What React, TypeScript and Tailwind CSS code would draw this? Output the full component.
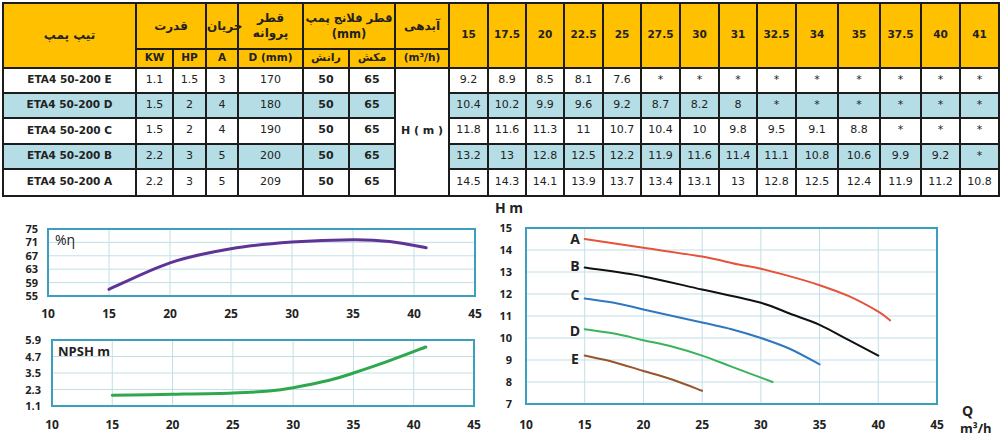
import React from "react";

type P = [number, number];

function smooth(pts: P[]): string {
  let d = `M${pts[0][0].toFixed(1)},${pts[0][1].toFixed(1)}`;
  for (let i = 0; i < pts.length - 1; i++) {
    const p0 = pts[i - 1] || pts[i];
    const p1 = pts[i];
    const p2 = pts[i + 1];
    const p3 = pts[i + 2] || p2;
    const c1x = p1[0] + (p2[0] - p0[0]) / 6;
    const c1y = p1[1] + (p2[1] - p0[1]) / 6;
    const c2x = p2[0] - (p3[0] - p1[0]) / 6;
    const c2y = p2[1] - (p3[1] - p1[1]) / 6;
    d += ` C${c1x.toFixed(1)},${c1y.toFixed(1)} ${c2x.toFixed(1)},${c2y.toFixed(1)} ${p2[0].toFixed(1)},${p2[1].toFixed(1)}`;
  }
  return d;
}

const FONT = '"Open Sans", "Liberation Sans", sans-serif';
const TEAL = "#3aa0bd";
const GRID = "#c2dfe7";

const flows = ["15", "17.5", "20", "22.5", "25", "27.5", "30", "31", "32.5", "34", "35", "37.5", "40", "41"];

type Row = { name: string; kw: string; hp: string; a: string; d: string; h: string[]; blue: boolean };

const rows: Row[] = [
  { name: "ETA4 50-200 E", kw: "1.1", hp: "1.5", a: "3", d: "170", blue: false, h: ["9.2", "8.9", "8.5", "8.1", "7.6", "*", "*", "*", "*", "*", "*", "*", "*", "*"] },
  { name: "ETA4 50-200 D", kw: "1.5", hp: "2", a: "4", d: "180", blue: true, h: ["10.4", "10.2", "9.9", "9.6", "9.2", "8.7", "8.2", "8", "*", "*", "*", "*", "*", "*"] },
  { name: "ETA4 50-200 C", kw: "1.5", hp: "2", a: "4", d: "190", blue: false, h: ["11.8", "11.6", "11.3", "11", "10.7", "10.4", "10", "9.8", "9.5", "9.1", "8.8", "*", "*", "*"] },
  { name: "ETA4 50-200 B", kw: "2.2", hp: "3", a: "5", d: "200", blue: true, h: ["13.2", "13", "12.8", "12.5", "12.2", "11.9", "11.6", "11.4", "11.1", "10.8", "10.6", "9.9", "9.2", "*"] },
  { name: "ETA4 50-200 A", kw: "2.2", hp: "3", a: "5", d: "209", blue: false, h: ["14.5", "14.3", "14.1", "13.9", "13.7", "13.4", "13.1", "13", "12.8", "12.5", "12.4", "11.9", "11.2", "10.8"] },
];

const rowH = ["h-[25px]", "h-[25px]", "h-[26px]", "h-[25px]", "h-[27px]"];

const cell = "border-2 border-[#1c1c1c] text-center p-0 align-middle";

function Table() {
  return (
    <table
      className="ml-[2px] mt-[2px] w-[996px] table-fixed border-collapse text-[11px] text-[#222]"
      style={{ fontFamily: '"DejaVu Sans", Verdana, sans-serif' }}
    >
      <colgroup>
        <col className="w-[133px]" />
        <col className="w-[37px]" />
        <col className="w-[33px]" />
        <col className="w-[32px]" />
        <col className="w-[65px]" />
        <col className="w-[46px]" />
        <col className="w-[46px]" />
        <col className="w-[54px]" />
        <col className="w-[39px]" />
        <col className="w-[38px]" />
        <col className="w-[38px]" />
        <col className="w-[39px]" />
        <col className="w-[38px]" />
        <col className="w-[39px]" />
        <col className="w-[39px]" />
        <col className="w-[38px]" />
        <col className="w-[39px]" />
        <col className="w-[42px]" />
        <col className="w-[42px]" />
        <col className="w-[41px]" />
        <col className="w-[39px]" />
        <col className="w-[39px]" />
      </colgroup>
      <thead>
        <tr className="h-[46px] bg-[#ffc000] font-bold">
          <th rowSpan={2} className={`${cell} text-[12px]`}>تیپ پمپ</th>
          <th colSpan={2} className={`${cell} text-[12px]`}>قدرت</th>
          <th className={`${cell} text-[12px] whitespace-nowrap`}>جریان</th>
          <th className={`${cell} text-[12px] leading-[15px]`}>قطر<br />پروانه</th>
          <th colSpan={2} className={`${cell} text-[11.5px] leading-[16px] whitespace-nowrap`}>قطر فلانج پمپ<br />(mm)</th>
          <th className={`${cell} text-[12px]`}>آبدهی</th>
          {flows.map((f) => (
            <th key={f} rowSpan={2} className={`${cell} text-[10.5px]`}>{f}</th>
          ))}
        </tr>
        <tr className="h-[17px] bg-[#ffc000] font-bold">
          <th className={`${cell} text-[10.5px]`}>KW</th>
          <th className={`${cell} text-[10.5px]`}>HP</th>
          <th className={`${cell} text-[10.5px]`}>A</th>
          <th className={`${cell} text-[10.5px]`}>D (mm)</th>
          <th className={`${cell} text-[11px]`}>رانش</th>
          <th className={`${cell} text-[11px]`}>مکش</th>
          <th className={`${cell} text-[10.5px]`}>(m³/h)</th>
        </tr>
      </thead>
      <tbody>
        {rows.map((r, i) => (
          <tr key={r.name} className={`${rowH[i]} ${r.blue ? "bg-[#b5dde6]" : "bg-white"}`}>
            <td className={`${cell} text-[10.5px] font-bold`}>{r.name}</td>
            <td className={cell}>{r.kw}</td>
            <td className={cell}>{r.hp}</td>
            <td className={cell}>{r.a}</td>
            <td className={cell}>{r.d}</td>
            <td className={`${cell} font-bold`}>50</td>
            <td className={`${cell} font-bold`}>65</td>
            {i === 0 && (
              <td rowSpan={5} className={`${cell} bg-white font-bold`}>H ( m )</td>
            )}
            {r.h.map((v, j) => (
              <td key={j} className={cell}>{v}</td>
            ))}
          </tr>
        ))}
      </tbody>
    </table>
  );
}

function EffChart() {
  const x = (q: number) => 48 + (q - 10) * (427 / 35);
  const y = (e: number) => 32 + (75 - e) * (67 / 20);
  const pts: P[] = [
    [15, 57], [20, 64.9], [25, 69.1], [30, 71.1], [35, 71.8], [38, 71.3], [41, 69.4],
  ].map(([q, e]) => [x(q), y(e)] as P);
  return (
    <svg width={490} height={125} style={{ fontFamily: FONT }}>
      {[15, 20, 25, 30, 35, 40].map((q) => (
        <line key={q} x1={x(q)} x2={x(q)} y1={32} y2={99} stroke={GRID} strokeWidth={1} />
      ))}
      {[71, 67, 63, 59].map((e) => (
        <line key={e} x1={48} x2={475} y1={y(e)} y2={y(e)} stroke={GRID} strokeWidth={1} />
      ))}
      <rect x={48} y={32} width={427} height={67} fill="none" stroke={TEAL} strokeWidth={2} />
      <path d={smooth(pts)} fill="none" stroke="#5f3497" strokeWidth={3} strokeLinecap="round" />
      {[75, 71, 67, 63, 59, 55].map((e) => (
        <text key={e} x={38} y={y(e) + 4} textAnchor="end" fontSize={11} fontWeight={700} fill="#222">{e}</text>
      ))}
      {[10, 15, 20, 25, 30, 35, 40, 45].map((q) => (
        <text key={q} x={x(q)} y={121} textAnchor="middle" fontSize={12} fontWeight={700} fill="#222">{q}</text>
      ))}
      <text x={55} y={48} fontSize={14} fill="#222">%η</text>
    </svg>
  );
}

function NpshChart() {
  const x = (q: number) => 52 + (q - 10) * (422 / 35);
  const y = (n: number) => 18 + (5.9 - n) * (66 / 4.8);
  const pts: P[] = [
    [15, 1.88], [20, 1.95], [25, 2.05], [28, 2.19], [30, 2.43], [33, 2.97], [35, 3.5], [38, 4.4], [41, 5.39],
  ].map(([q, n]) => [x(q), y(n)] as P);
  return (
    <svg width={490} height={115} style={{ fontFamily: FONT }}>
      {[15, 20, 25, 30, 35, 40].map((q) => (
        <line key={q} x1={x(q)} x2={x(q)} y1={18} y2={84} stroke={GRID} strokeWidth={1} />
      ))}
      {[4.7, 3.5, 2.3].map((n) => (
        <line key={n} x1={52} x2={474} y1={y(n)} y2={y(n)} stroke={GRID} strokeWidth={1} />
      ))}
      <rect x={52} y={18} width={422} height={66} fill="none" stroke={TEAL} strokeWidth={2} />
      <path d={smooth(pts)} fill="none" stroke="#2ea84c" strokeWidth={3} strokeLinecap="round" />
      {["5.9", "4.7", "3.5", "2.3", "1.1"].map((n) => (
        <text key={n} x={41} y={y(parseFloat(n)) + 4} textAnchor="end" fontSize={11} fontWeight={700} fill="#222">{n}</text>
      ))}
      {[10, 15, 20, 25, 30, 35, 40, 45].map((q) => (
        <text key={q} x={x(q)} y={107} textAnchor="middle" fontSize={12} fontWeight={700} fill="#222">{q}</text>
      ))}
      <text x={58} y={34} fontSize={13} fontWeight={700} fill="#222">NPSH m</text>
    </svg>
  );
}

const headCurves: { label: string; color: string; pts: P[]; ly: number }[] = [
  { label: "A", color: "#e5533b", ly: 47, pts: [[15, 14.5], [20, 14.1], [25, 13.7], [28, 13.35], [30, 13.15], [32.5, 12.8], [35, 12.4], [37.5, 11.9], [40, 11.2], [41, 10.8]] },
  { label: "B", color: "#111111", ly: 74, pts: [[15, 13.2], [20, 12.8], [25, 12.2], [30, 11.6], [32.5, 11.1], [35, 10.6], [37.5, 9.9], [40, 9.2]] },
  { label: "C", color: "#2f78bf", ly: 103, pts: [[15, 11.8], [17.5, 11.6], [20, 11.3], [25, 10.7], [27.5, 10.4], [30, 10.0], [32.5, 9.5], [35, 8.8]] },
  { label: "D", color: "#3bb35b", ly: 139, pts: [[15, 10.4], [17.5, 10.2], [20, 9.9], [22.5, 9.6], [25, 9.2], [27.5, 8.7], [31, 8.0]] },
  { label: "E", color: "#96552c", ly: 167, pts: [[15, 9.2], [17.5, 8.9], [20, 8.5], [22.5, 8.1], [25, 7.6]] },
];

function HeadChart() {
  const x = (q: number) => 36 + (q - 10) * (411 / 35);
  const y = (h: number) => 31 + (15 - h) * 22;
  return (
    <svg width={510} height={240} style={{ fontFamily: FONT }}>
      {[15, 20, 25, 30, 35, 40].map((q) => (
        <line key={q} x1={x(q)} x2={x(q)} y1={31} y2={207} stroke={GRID} strokeWidth={1} />
      ))}
      {[14, 13, 12, 11, 10, 9, 8].map((h) => (
        <line key={h} x1={36} x2={447} y1={y(h)} y2={y(h)} stroke={GRID} strokeWidth={1} />
      ))}
      <rect x={36} y={31} width={411} height={176} fill="none" stroke={TEAL} strokeWidth={2} />
      {headCurves.map((c) => (
        <path
          key={c.label}
          d={smooth(c.pts.map(([q, h]) => [x(q), y(h)] as P))}
          fill="none"
          stroke={c.color}
          strokeWidth={2}
          strokeLinecap="round"
        />
      ))}
      {headCurves.map((c) => (
        <text key={c.label} x={85} y={c.ly} textAnchor="middle" fontSize={14} fontWeight={700} fill="#222">{c.label}</text>
      ))}
      {[15, 14, 13, 12, 11, 10, 9, 8, 7].map((h) => (
        <text key={h} x={22} y={y(h) + 4} textAnchor="end" fontSize={11} fontWeight={700} fill="#222">{h}</text>
      ))}
      {[10, 15, 20, 25, 30, 35, 40, 45].map((q) => (
        <text key={q} x={x(q)} y={232} textAnchor="middle" fontSize={12} fontWeight={700} fill="#222">{q}</text>
      ))}
      <text x={5} y={16} fontSize={14} fontWeight={700} fill="#222">H m</text>
      <text x={472} y={219} fontSize={14} fontWeight={700} fill="#222">Q</text>
      <text x={470} y={236} fontSize={13} fontWeight={700} fill="#222">m³/h</text>
    </svg>
  );
}

export default function App() {
  return (
    <div className="w-[1000px] h-[435px] overflow-hidden bg-white">
      <Table />
      <div className="flex">
        <div className="flex w-[490px] flex-col">
          <EffChart />
          <NpshChart />
        </div>
        <div className="w-[510px]">
          <HeadChart />
        </div>
      </div>
    </div>
  );
}
